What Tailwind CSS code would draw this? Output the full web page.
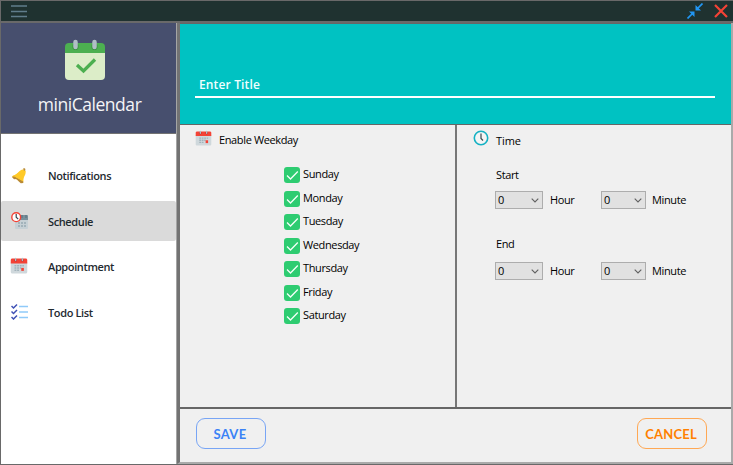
<!DOCTYPE html>
<html lang="en">
<head>
<meta charset="utf-8">
<title>miniCalendar</title>
<script src="https://cdn.jsdelivr.net/npm/@tailwindcss/browser@4"></script>
</head>
<body class="w-[733px] h-[465px] overflow-hidden bg-[#696969] font-['Open_Sans','Noto_Sans',sans-serif] text-[11px] leading-4 text-black">
<svg class="hidden">
  <symbol id="cal" viewBox="0 0 48 48">
    <path fill="#cfd8dc" d="M2 40V14h44v26c0 2.200-1.800 4-4 4H6c-2.200 0-4-1.800-4-4z"/>
    <path fill="#f44336" d="M46 8v9H2V8c0-2.200 1.800-4 4-4h36c2.200 0 4 1.800 4 4z"/>
    <path stroke="#b71c1c" stroke-width="6" stroke-linecap="round" d="M15 8v1M33 8v1"/>
    <path stroke="#b0bec5" stroke-width="4" stroke-linecap="round" d="M15 4v5M33 4v5"/>
    <path fill="#a3b3bb" d="M12 21h5v4h-5zM19 21h5v4h-5zM26 21h5v4h-5zM33 21h4v4h-4zM12 27h5v4h-5zM19 27h5v4h-5zM26 27h4v4h-4zM12 33h5v4h-5zM19 33h5v4h-5z"/>
    <path fill="#f44336" d="M30 29h7v8h-7z"/>
  </symbol>
  <symbol id="check" viewBox="0 0 16 16">
    <rect width="16" height="16" rx="3" fill="#2ecc71"/>
    <path d="M3 8.500L6.500 12 13.800 4.500" fill="none" stroke="#f4fff8" stroke-width="1.300"/>
  </symbol>
  <symbol id="chev" viewBox="0 0 8 5"><path d="M.7.7L4 4 7.300.7" fill="none" stroke="#606060" stroke-width="1.100"/></symbol>
</svg>
<div class="flex h-[465px] flex-col pt-px pl-px">
  <header class="flex h-5 shrink-0 items-center bg-[#1f3230] pl-[10px] pr-[5px]">
    <svg class="h-[14px] w-4" viewBox="0 0 16 14"><path d="M0 2h16M0 7.500h16M0 12.500h16" stroke="#607d8b" stroke-width="1.700"/></svg>
    <svg class="ml-auto size-4" viewBox="0 0 16 16"><g fill="none" stroke="#2196f3" stroke-width="1.700"><path d="M15.500.5L10 6M.5 15.500L6 10"/></g><path fill="#2196f3" d="M8.500 2v5.500H14L12.200 5.700 10.300 3.800zM7.500 14V8.500H2l1.800 1.800 1.900 1.900z"/></svg>
    <svg class="ml-[11px] size-[14px]" viewBox="0 0 14 14"><path d="M1 1l12 12M13 1L1 13" stroke="#f44336" stroke-width="2.200"/></svg>
  </header>
  <div class="flex min-h-0 flex-1 pt-[2px]">
    <aside class="mb-px flex w-[176px] shrink-0 flex-col border-r border-[#a5a5a5] bg-white">
      <div class="flex h-[111px] shrink-0 flex-col items-center border-b border-[#737373] bg-[#474f6e] pt-4">
        <svg class="mr-[7px] h-[42px] w-[42px]" viewBox="0 0 42 42">
          <path fill="#dcedc8" d="M1 13h40v24q0 4-4 4H5q-4 0-4-4z"/>
          <path fill="#4caf50" d="M1 14V8q0-4 4-4h32q4 0 4 4v6z"/>
          <path stroke="#388e3c" stroke-width="6" stroke-linecap="round" d="M11.500 7v1M30.500 7v1"/>
          <path stroke="#b0bec5" stroke-width="4.500" stroke-linecap="round" d="M11.500 3v5M30.500 3v5"/>
          <path fill="none" stroke="#4caf50" stroke-width="3.300" d="M13 26l6.500 6L31 20.500"/>
        </svg>
        <div class="ml-[2px] mt-[11px] text-[17.500px] leading-6 text-[#f4f4f6] tracking-[-.45px]">miniCalendar</div>
      </div>
      <nav class="mt-[19px] flex flex-col font-semibold text-[11px] tracking-[-.38px] text-[#1f2a30]">
        <a class="flex h-[48px] items-center pl-[10px]">
          <svg class="mr-[21px] mb-[3px] size-4" viewBox="0 0 16 16"><path fill="#ffca28" d="M12 1.500C8 2 7 6.500 2 7.500L1 9l9 5 2.500-.5C11.500 9 15.500 7 14.500 3z"/><path fill="#b98a35" d="M12 .5l2-.2.500 2-1.500 1zM.8 8.700l2.500-.2 9 5v1.500l-2.500.3-2-1.800L5.500 11l-2.500.2z"/><path fill="#ffca28" d="M3 8l8-6 3.500 1-2 5-.5 5z"/></svg><span class="mb-[2px]">Notifications</span></a>
        <a class="flex h-[40px] items-center rounded-[2px] bg-[#dadada] pl-[10px]">
          <svg class="mr-[20px] mb-[2px] h-[17px] w-[17px]" viewBox="0 0 17 17"><path fill="#c6d0d5" d="M4 5h13v11q0 1-1 1H5q-1 0-1-1z"/><path fill="#78909c" d="M8 3h8q1 0 1 1v4H8z"/><path stroke="#546e7a" d="M11 3v3M15 3v3"/><path fill="#a3b3bb" d="M7 10h2v2H7zM10 10h2v2h-2zM13 10h2v2h-2zM7 13h2v2H7zM10 13h2v2h-2zM13 13h2v2h-2z"/><circle cx="5.200" cy="5.200" r="4.400" fill="#fff" stroke="#f44336" stroke-width="1.400"/><path fill="none" stroke="#37474f" stroke-width="1.200" d="M5.200 2v3.200L7.200 7.200"/></svg><span class="mt-px">Schedule</span></a>
        <a class="flex h-[51px] items-center pl-[9px]">
          <svg class="mr-[20px] mb-[2px] h-[18px] w-[18px]"><use href="#cal"/></svg><span>Appointment</span></a>
        <a class="flex h-[40px] items-center pl-[10px]">
          <svg class="mr-[20px] mb-[2px] h-[17px] w-[17px]" viewBox="0 0 17 17"><path fill="none" stroke="#3f51b5" stroke-width="1.500" d="M.5 3L2.500 5 6 1.500M.5 8.500l2 2L6 7M.5 14l2 2L6 12.500"/><path stroke="#90caf9" stroke-width="1.700" d="M8 3.500h9M8 9h9M8 14.500h9"/></svg><span class="mt-px">Todo List</span></a>
      </nav>
    </aside>
    <main class="mb-px flex flex-1 flex-col border-l-[3px] border-r-2 border-b-2 border-l-[#737373] border-r-[#aaa] border-b-[#aaa] bg-[#f0f0f0]">
      <section class="flex h-[102px] shrink-0 flex-col border-t border-b-[1.500px] border-[#666] bg-[#00c2c2] pt-[53px] pl-[15px] pr-[16px]">
        <div class="h-[21px] border-b-2 border-white pl-[4px] text-[12px] leading-4 font-semibold tracking-[.15px] text-[#f0ffff]">Enter Title</div>
      </section>
      <section class="flex h-[284px] shrink-0 border-b-2 border-[#666]">
        <div class="w-[277px] shrink-0 border-r-2 border-[#777] pt-[5px]">
          <div class="flex items-center pl-[15px]"><svg class="mr-[7px] mb-[3px] h-[17px] w-[17px]"><use href="#cal"/></svg><span class="tracking-[-.37px]">Enable Weekday</span></div>
          <ul class="mt-[16px] ml-[104px] grid auto-rows-[23.5px] tracking-[-.37px]">
            <li class="flex items-start gap-[3px]"><svg class="mt-[1px] size-4"><use href="#check"/></svg>Sunday</li>
            <li class="flex items-start gap-[3px]"><svg class="mt-[1px] size-4"><use href="#check"/></svg>Monday</li>
            <li class="flex items-start gap-[3px]"><svg class="mt-[1px] size-4"><use href="#check"/></svg>Tuesday</li>
            <li class="flex items-start gap-[3px]"><svg class="mt-[1px] size-4"><use href="#check"/></svg>Wednesday</li>
            <li class="flex items-start gap-[3px]"><svg class="mt-[1px] size-4"><use href="#check"/></svg>Thursday</li>
            <li class="flex items-start gap-[3px]"><svg class="mt-[1px] size-4"><use href="#check"/></svg>Friday</li>
            <li class="flex items-start gap-[3px]"><svg class="mt-[1px] size-4"><use href="#check"/></svg>Saturday</li>
          </ul>
        </div>
        <div class="flex-1 pt-[5px] pl-[16px] tracking-[-.37px]">
          <div class="flex h-[21px] items-start"><svg class="mr-[7px] size-4" viewBox="0 0 16 16"><circle cx="8" cy="8" r="6.700" fill="#f4f4f4" stroke="#14b1c3" stroke-width="1.600"/><path fill="none" stroke="#37474f" stroke-width="1.200" d="M8 3.500v5l2 2"/></svg><span class="mt-[3px] tracking-[-.1px]">Time</span></div>
          <div class="ml-[23px] mt-[16px]">Start</div>
          <div class="ml-[22px] mt-[8px] flex h-[18px] items-center">
            <div class="flex h-[18px] w-12 items-center justify-between border border-[#adadad] bg-[#e1e1e1] pl-[2px] pr-[3px]"><span>0</span><svg class="h-[5px] w-2"><use href="#chev"/></svg></div><span class="ml-[7px] w-[51px]">Hour</span>
            <div class="flex h-[18px] w-[45px] items-center justify-between border border-[#adadad] bg-[#e1e1e1] pl-[2px] pr-[3px]"><span>0</span><svg class="h-[5px] w-2"><use href="#chev"/></svg></div><span class="ml-[6px]">Minute</span>
          </div>
          <div class="ml-[23px] mt-[27px]">End</div>
          <div class="ml-[22px] mt-[10px] flex h-[18px] items-center">
            <div class="flex h-[18px] w-12 items-center justify-between border border-[#adadad] bg-[#e1e1e1] pl-[2px] pr-[3px]"><span>0</span><svg class="h-[5px] w-2"><use href="#chev"/></svg></div><span class="ml-[7px] w-[51px]">Hour</span>
            <div class="flex h-[18px] w-[45px] items-center justify-between border border-[#adadad] bg-[#e1e1e1] pl-[2px] pr-[3px]"><span>0</span><svg class="h-[5px] w-2"><use href="#chev"/></svg></div><span class="ml-[6px]">Minute</span>
          </div>
        </div>
      </section>
      <footer class="flex flex-1 items-start justify-between pt-[9px] pl-[16px] pr-[24px] font-['Lato',sans-serif] text-[13px] font-bold">
        <button class="h-[31px] w-[70px] rounded-[9px] border border-[#78a5f5] pr-[2px] tracking-[.3px] text-[#3b82f6]">SAVE</button>
        <button class="h-[31px] w-[70px] rounded-[9px] border border-[#ffa854] pr-[2px] tracking-[.2px] text-[#ff8000]">CANCEL</button>
      </footer>
    </main>
  </div>
</div>
</body>
</html>
